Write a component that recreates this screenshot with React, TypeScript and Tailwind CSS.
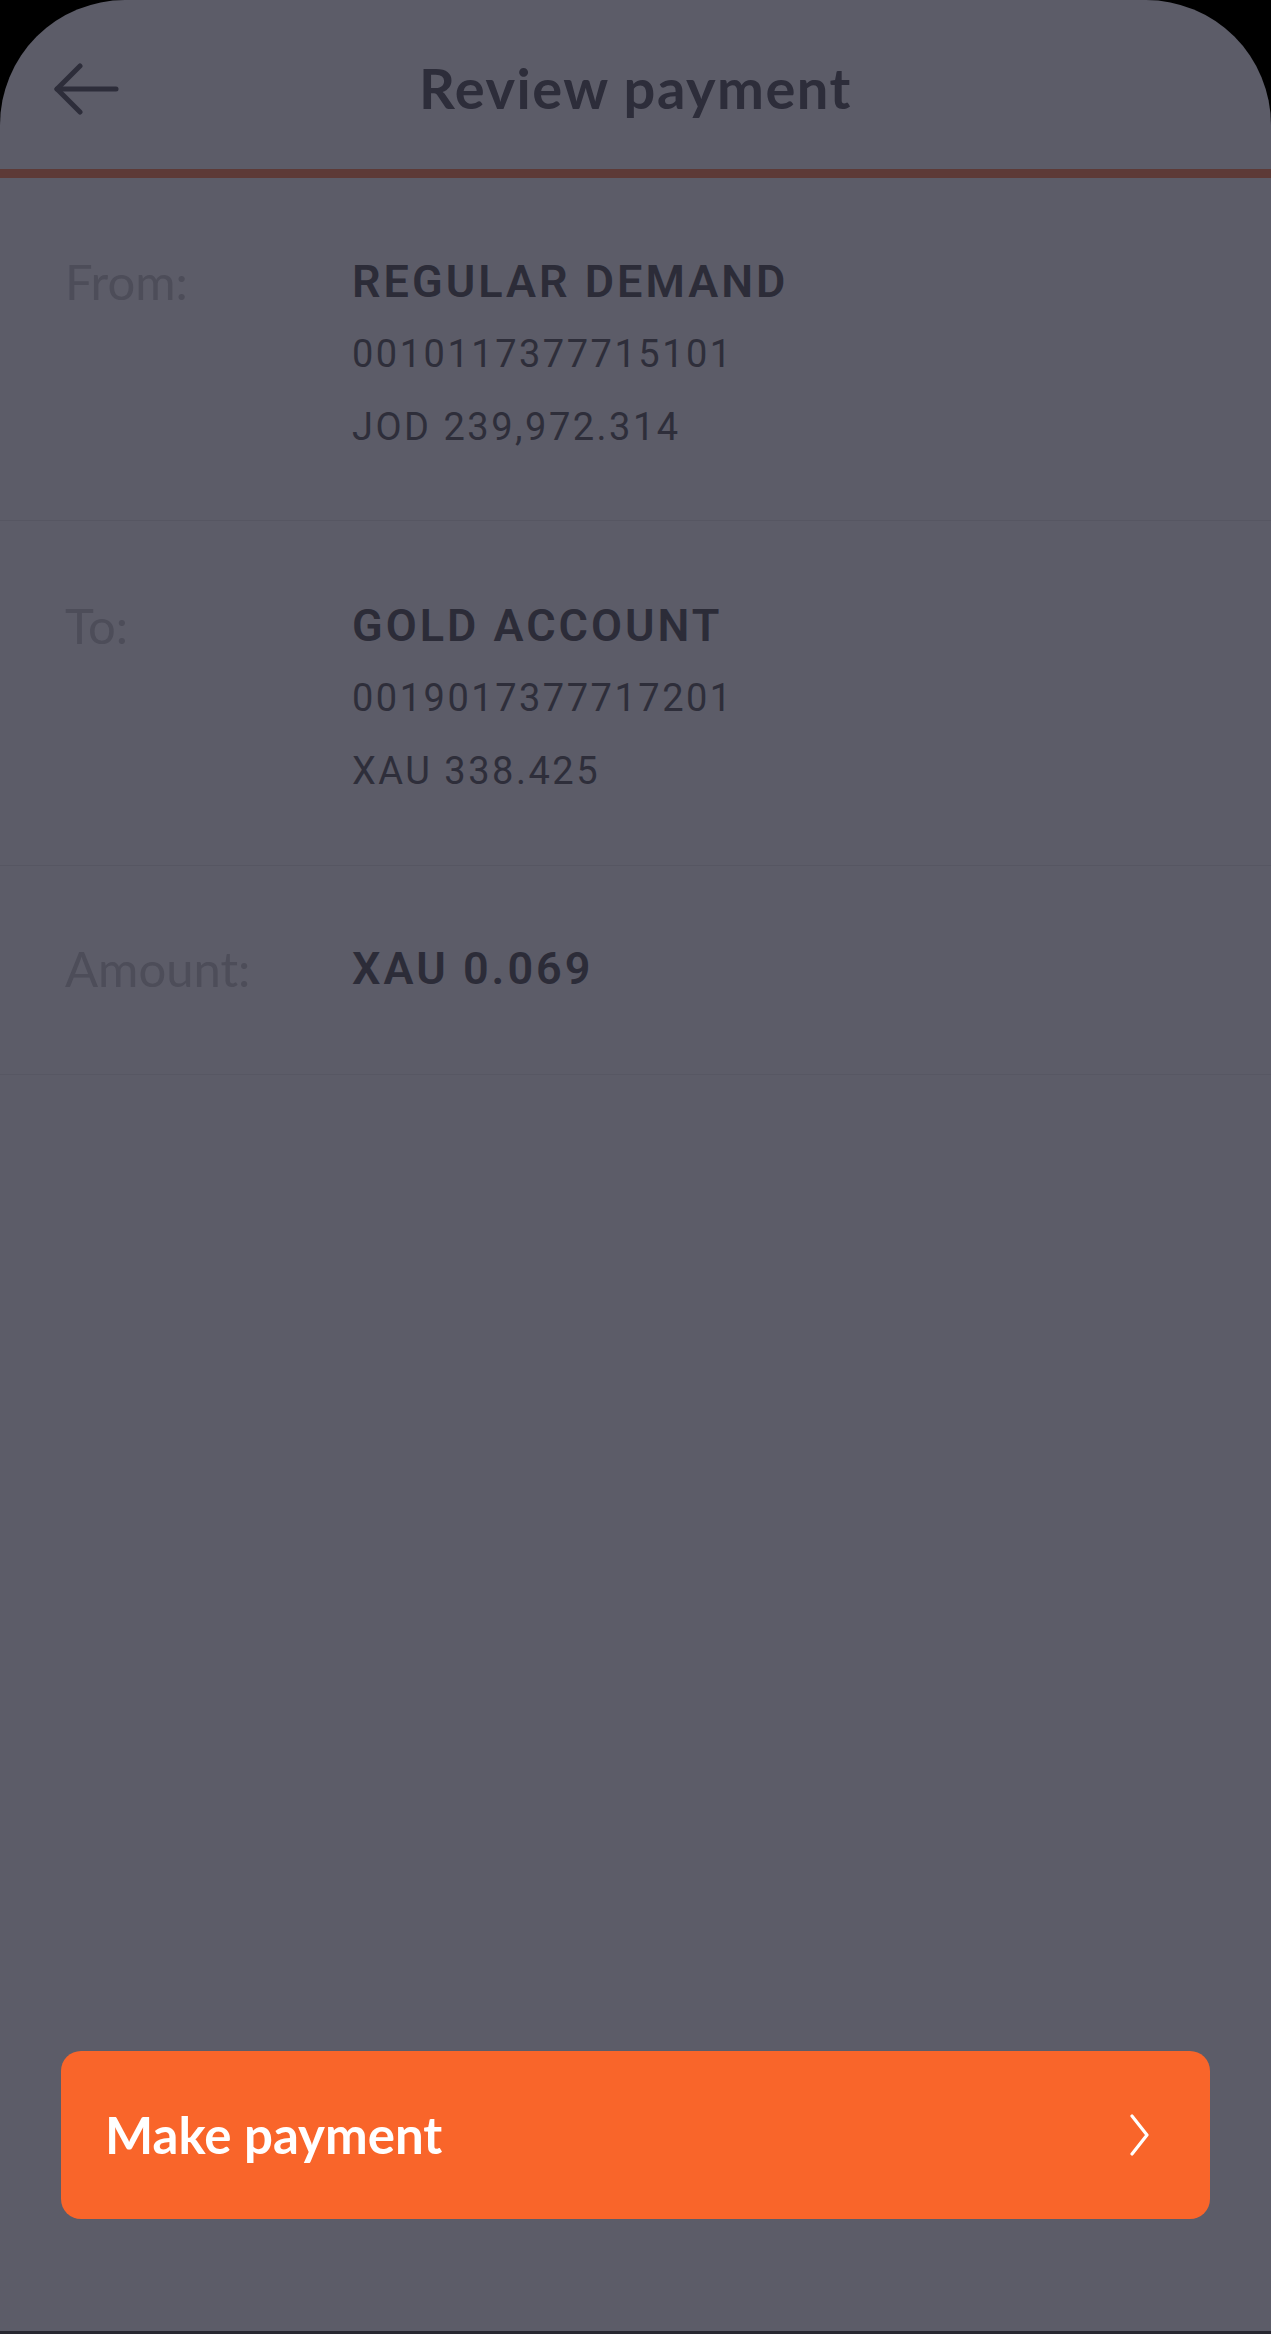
import React from "react";

const valueFont = { fontFamily: "Roboto, 'Liberation Sans', sans-serif" };

function Row({
  label,
  title,
  lines,
}: {
  label: string;
  title: string;
  lines: string[];
}) {
  return (
    <div className="flex pl-[65px]">
      <div
        className="w-[287px] shrink-0 text-[49px] leading-[73px] font-normal text-[#4d4d59]"
        style={{ fontFamily: "Lato, 'Liberation Sans', sans-serif" }}
      >
        {label}
      </div>
      <div className="flex flex-col">
        <div
          className="text-[45px] leading-[73px] font-semibold tracking-[3px] text-[#2c2c38]"
          style={valueFont}
        >
          {title}
        </div>
        {lines.map((l) => (
          <div
            key={l}
            className="text-[38px] leading-[73px] font-normal tracking-[2.5px] text-[#2e2e3a]"
            style={valueFont}
          >
            {l}
          </div>
        ))}
      </div>
    </div>
  );
}

export default function App() {
  return (
    <div className="w-[1271px] h-[2334px] bg-black">
      <div className="relative flex h-full flex-col overflow-hidden rounded-t-[125px] bg-[#5c5c68] border-b-[3px] border-[#272730]">
        {/* Header */}
        <div className="relative flex h-[169px] shrink-0 items-center justify-center">
          <svg
            className="absolute left-[53px] top-[63px]"
            width="66"
            height="52"
            viewBox="0 0 66 52"
            fill="none"
            stroke="#2d2d3a"
            strokeWidth="5"
            strokeLinecap="round"
            strokeLinejoin="round"
          >
            <path d="M63 26H4" />
            <path d="M27 3L4 26L27 49" />
          </svg>
          <div
            className="pt-[6px] text-[56px] font-bold tracking-[1.5px] text-[#2d2d3a]"
            style={{ fontFamily: "Lato, 'Liberation Sans', sans-serif" }}
          >
            Review payment
          </div>
        </div>
        <div className="h-[9px] shrink-0 bg-[#5d3a37]" />

        {/* From */}
        <div className="pt-[67px] pb-[56px] border-b border-[#565662]">
          <Row
            label="From:"
            title="REGULAR DEMAND"
            lines={["0010117377715101", "JOD 239,972.314"]}
          />
        </div>
        {/* To */}
        <div className="pt-[68px] pb-[57px] border-b border-[#565662]">
          <Row
            label="To:"
            title="GOLD ACCOUNT"
            lines={["0019017377717201", "XAU 338.425"]}
          />
        </div>
        {/* Amount */}
        <div className="pt-[66px] pb-[69px] border-b border-[#575763]">
          <Row label="Amount:" title="XAU 0.069" lines={[]} />
        </div>

        <div className="flex-1" />

        <div className="px-[61px] pb-[112px]">
          <button className="flex h-[168px] w-full items-center justify-between rounded-[20px] bg-[#f9652a] pl-[44px] pr-[60px]">
            <span
              className="text-[51px] font-bold text-white"
              style={{ fontFamily: "Lato, 'Liberation Sans', sans-serif" }}
            >
              Make payment
            </span>
            <svg
              width="20"
              height="42"
              viewBox="0 0 20 42"
              fill="none"
              stroke="white"
              strokeWidth="3.2"
              strokeLinecap="round"
              strokeLinejoin="round"
            >
              <path d="M2 2L17 21L2 40" />
            </svg>
          </button>
        </div>
      </div>
    </div>
  );
}
